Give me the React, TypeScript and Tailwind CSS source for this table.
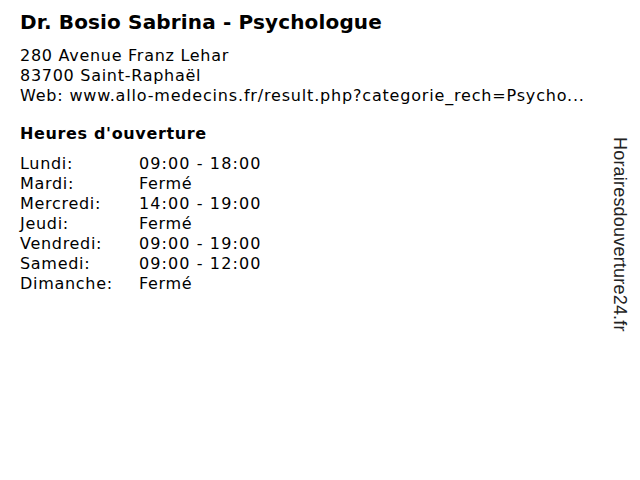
const hours = [
  ["Lundi:", "09:00 - 18:00"],
  ["Mardi:", "Fermé"],
  ["Mercredi:", "14:00 - 19:00"],
  ["Jeudi:", "Fermé"],
  ["Vendredi:", "09:00 - 19:00"],
  ["Samedi:", "09:00 - 12:00"],
  ["Dimanche:", "Fermé"],
];

export default function App() {
  return (
    <div className="flex w-[640px] h-[480px] bg-white text-black font-['DejaVu_Sans',sans-serif]">
      {/* MAIN */}
      <div className="flex-1 pl-5 pt-[9px]">
        <h1 className="text-[20px] font-bold leading-[26px] tracking-[0.15px]">Dr. Bosio Sabrina - Psychologue</h1>

        <div className="mt-[11px] text-[16px] leading-[20px] tracking-[0.72px]">
          <div>280 Avenue Franz Lehar</div>
          <div>83700 Saint-Raphaël</div>
          <div className="tracking-[0.82px]">Web: www.allo-medecins.fr/result.php?categorie_rech=Psycho...</div>
        </div>

        <h2 className="mt-[18px] text-[16px] font-bold leading-[20px] tracking-[0.65px]">Heures d'ouverture</h2>

        <div className="mt-[10px] text-[16px] leading-[20px] tracking-[0.7px]">
          {hours.map(([day, time]) => (
            <div key={day} className="flex">
              <span className="w-[119px]">{day}</span>
              <span className={time.startsWith("F") ? "" : "tracking-[1.1px]"}>{time}</span>
            </div>
          ))}
        </div>
      </div>

      {/* SIDE LABEL */}
      <div className="w-[40px] pt-[137px] flex justify-center">
        <span className="[writing-mode:vertical-rl] text-[18px] leading-[20px] tracking-[0.2px] font-['Liberation_Sans',sans-serif] text-[#222]">
          Horairesdouverture24.fr
        </span>
      </div>
    </div>
  );
}
